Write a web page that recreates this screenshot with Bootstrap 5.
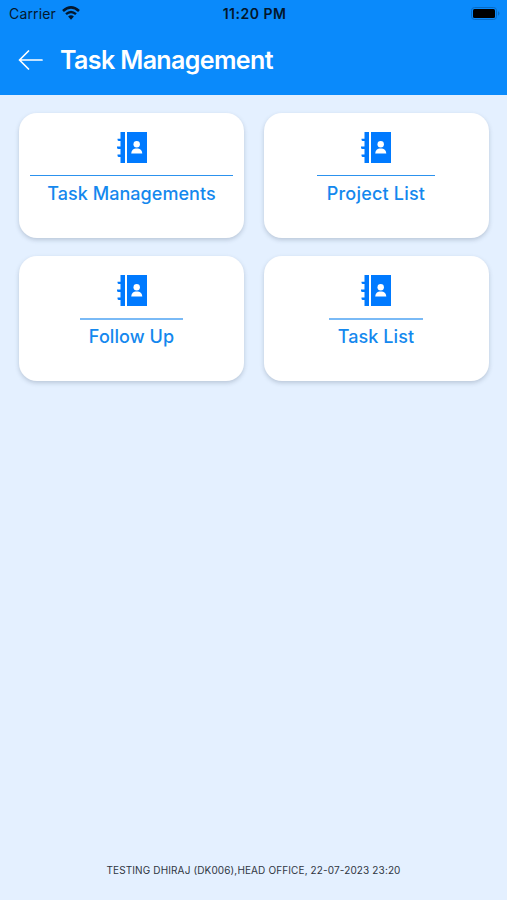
<!DOCTYPE html>
<html lang="en">
<head>
<meta charset="utf-8">
<meta name="viewport" content="width=device-width, initial-scale=1">
<title>Task Management</title>
<link href="https://cdn.jsdelivr.net/npm/bootstrap@5.3.0/dist/css/bootstrap.min.css" rel="stylesheet">
<style>
  body { font-family: Inter, "Liberation Sans", sans-serif; background: #e4f0ff; color: #000; }
  .app-header { height: 95px; background: #0a8afb; }
  .status-bar { height: 28px; padding: 0 7px 0 9px; font-size: 14px; line-height: 28px; color: #04182d; }
  .status-bar > * { flex: 1 1 0; }
  .carrier { letter-spacing: .15px; }
  .wifi { margin-left: 6px; margin-top: -2px; }
  .battery { margin-bottom: 2px; }
  .clock { font-weight: 600; font-size: 14px; letter-spacing: .5px; color: #03162b; }
  .title-bar { height: 63px; padding-left: 18px; }
  .screen-title { font-size: 25px; font-weight: 600; letter-spacing: -.62px; line-height: 30px; margin: 0 0 0 17px; }
  .task-grid { padding: 18px 18px 0 19px; }
  .tiles { display: grid; grid-template-columns: 225px 225px; column-gap: 19.5px; row-gap: 18px; }
  .tile { height: 125px; border: 0; border-radius: 18px; padding-top: 19px; box-shadow: 0 2px 4px rgba(60,80,105,.25); }
  .tile-label { margin-top: 12px; padding: 6px 9px 0; border-top: 1px solid #2c92ee; line-height: 24px; font-size: 18px; font-weight: 500; letter-spacing: .07px; color: #1488ee; }
  .label-wide { padding: 6px 17px 0; letter-spacing: .04px; }
  .label-project { padding: 6px 10px 0; letter-spacing: .2px; }
  .label-light { padding-top: 5px; border-top: 2px solid #7abaf6; }
  .footer-note { font-size: 10px; line-height: 14px; padding-bottom: 23px; letter-spacing: .13px; color: #30363f; }
</style>
<script src="https://cdn.jsdelivr.net/npm/bootstrap@5.3.0/dist/js/bootstrap.bundle.min.js"></script>
</head>
<body>
<svg width="0" height="0" class="d-none" aria-hidden="true">
  <symbol id="book" viewBox="0 0 30 31">
    <path fill="#007aff" d="M3.5 0H8V31H3.5V25H2a1.5 1.5 0 0 1-1.5-1.5V22.5H3.5V17H1.5A1.5 1.5 0 0 1 0 15.5V14.5H3.5V9H2A1.5 1.5 0 0 1 .5 7.5V6.8H3.5Z"/>
    <path fill="#007aff" d="M10 0H30V31H10Z"/>
    <circle cx="19.7" cy="12.2" r="3.2" fill="#fff"/>
    <path fill="#fff" d="M14.2 21.5c.2-3 1.8-4.8 4.2-5h2.6c2.5.2 4.1 2 4.3 5Z"/>
  </symbol>
</svg>
<div class="d-flex flex-column vh-100 overflow-hidden">
  <header class="app-header">
    <div class="status-bar d-flex align-items-center">
      <div class="d-flex align-items-center">
        <span class="carrier">Carrier</span>
        <svg class="wifi" width="18" height="14" viewBox="0 0 18 14" fill="none" stroke="#04182d">
          <path d="M1 5Q9-2.2 17 5" stroke-width="2.6"/>
          <path d="M4 8.2Q9 3.8 14 8.2" stroke-width="2.4"/>
          <path d="M6.1 10.4Q9 8 11.9 10.4L9 13.7Z" fill="#04182d" stroke="none"/>
        </svg>
      </div>
      <div class="clock text-center">11:20 PM</div>
      <div class="d-flex justify-content-end">
        <svg class="battery" width="29" height="13" viewBox="0 0 29 13">
          <rect x=".5" y=".5" width="25" height="12" rx="3" fill="none" stroke="#086bc4"/>
          <rect x="2" y="2" width="22" height="9" rx="1.5" fill="#000"/>
          <path d="M27 4.3a2.4 2.4 0 0 1 0 4.4Z" fill="#086bc4"/>
        </svg>
      </div>
    </div>
    <div class="title-bar d-flex align-items-center text-white">
      <svg width="25" height="20" viewBox="0 0 25 20" fill="none" stroke="#fff" stroke-width="1.7" stroke-linecap="round" stroke-linejoin="round"><path d="M24 10H1.5M10.5 1L1.5 10L10.5 19"/></svg>
      <h1 class="screen-title">Task Management</h1>
    </div>
  </header>
  <main class="task-grid flex-grow-1">
    <div class="tiles">
      <div class="card tile align-items-center"><svg width="30" height="31"><use href="#book"/></svg><div class="tile-label label-wide text-nowrap">Task Managements</div></div>
      <div class="card tile align-items-center"><svg width="30" height="31"><use href="#book"/></svg><div class="tile-label label-project text-nowrap">Project List</div></div>
      <div class="card tile align-items-center"><svg width="30" height="31"><use href="#book"/></svg><div class="tile-label label-light text-nowrap">Follow Up</div></div>
      <div class="card tile align-items-center"><svg width="30" height="31"><use href="#book"/></svg><div class="tile-label label-light text-nowrap">Task List</div></div>
    </div>
  </main>
  <footer class="footer-note text-center">TESTING DHIRAJ (DK006),HEAD OFFICE, 22-07-2023 23:20</footer>
</div>
</body>
</html>
